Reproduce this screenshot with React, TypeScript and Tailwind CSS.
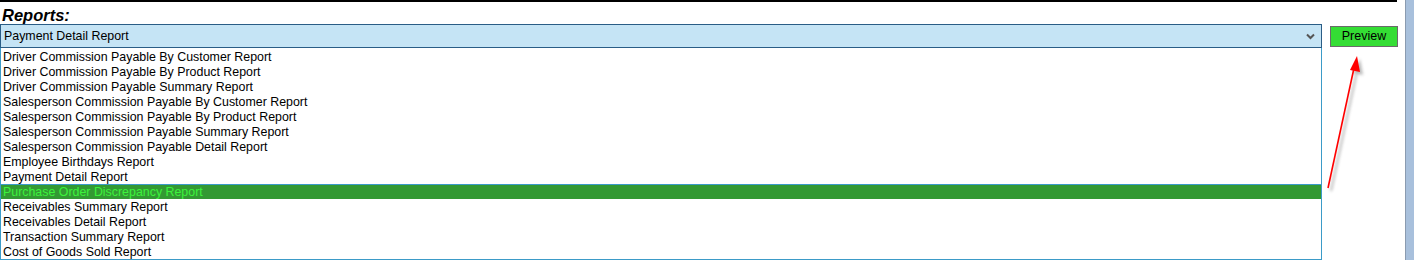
import React from "react";

const items = [
  "Driver Commission Payable By Customer Report",
  "Driver Commission Payable By Product Report",
  "Driver Commission Payable Summary Report",
  "Salesperson Commission Payable By Customer Report",
  "Salesperson Commission Payable By Product Report",
  "Salesperson Commission Payable Summary Report",
  "Salesperson Commission Payable Detail Report",
  "Employee Birthdays Report",
  "Payment Detail Report",
  "Purchase Order Discrepancy Report",
  "Receivables Summary Report",
  "Receivables Detail Report",
  "Transaction Summary Report",
  "Cost of Goods Sold Report",
];

export default function App() {
  return (
    <div
      className="relative flex w-[1414px] h-[260px] bg-white overflow-hidden"
      style={{ fontFamily: '"Liberation Sans", Arial, sans-serif' }}
    >
      <div className="w-[1405px] flex flex-col">
        <div className="w-[1397px] h-[2px] bg-black" />
        <div className="h-[22px] pl-[2px] pt-[4px] text-[16.5px] leading-[18px] font-bold italic text-black">
          Reports:
        </div>
        <div className="flex items-start gap-[8px]">
          <div className="flex flex-col w-[1322px]">
            <div className="h-[24px] border border-[#2a5d86] bg-[#c5e4f5] flex items-center justify-between pl-[3px] pr-[6px] text-[12.4px] text-black">
              <span>Payment Detail Report</span>
              <svg width="9" height="7" viewBox="0 0 9 7">
                <path d="M1 1.5 L4.5 5 L8 1.5" fill="none" stroke="#555" strokeWidth="2" />
              </svg>
            </div>
            <div className="h-[212px] border border-t-0 border-[#3b9bc8] flex flex-col pt-[1px]">
              {items.map((it, i) =>
                i === 9 ? (
                  <div
                    key={it}
                    className="h-[15px] leading-[16px] text-[12.4px] pl-[2px] bg-[#339933] text-[#3cf23c] shadow-[inset_0_1px_0_#3b9bc8] whitespace-nowrap"
                  >
                    {it}
                  </div>
                ) : (
                  <div key={it} className="h-[15px] leading-[16px] text-[12.4px] pl-[2px] text-black whitespace-nowrap">
                    {it}
                  </div>
                )
              )}
            </div>
          </div>
          <button className="mt-[2px] w-[68px] h-[21px] border border-[#6a6a6a] bg-[#34dd34] text-[12.5px] leading-[19px] text-black text-center">
            Preview
          </button>
        </div>
      </div>
      <div className="w-[9px] h-full bg-[#a8c0dc] border-l border-[#8a9bb0]" />
      <svg className="absolute left-0 top-0 pointer-events-none" width="1414" height="260">
        <defs>
          <filter id="sh" x="-50%" y="-50%" width="200%" height="200%">
            <feGaussianBlur stdDeviation="1.5" />
          </filter>
        </defs>
        <g transform="translate(3,3)" filter="url(#sh)" opacity="0.45">
          <line x1="1328" y1="188" x2="1354" y2="68" stroke="#666" strokeWidth="2" />
          <polygon points="1357,56 1350,70 1360,72" fill="#666" />
        </g>
        <line x1="1328" y1="188" x2="1354" y2="68" stroke="#ff0000" strokeWidth="1.6" />
        <polygon points="1357,56 1350,70 1360,72" fill="#ff0000" />
      </svg>
    </div>
  );
}
